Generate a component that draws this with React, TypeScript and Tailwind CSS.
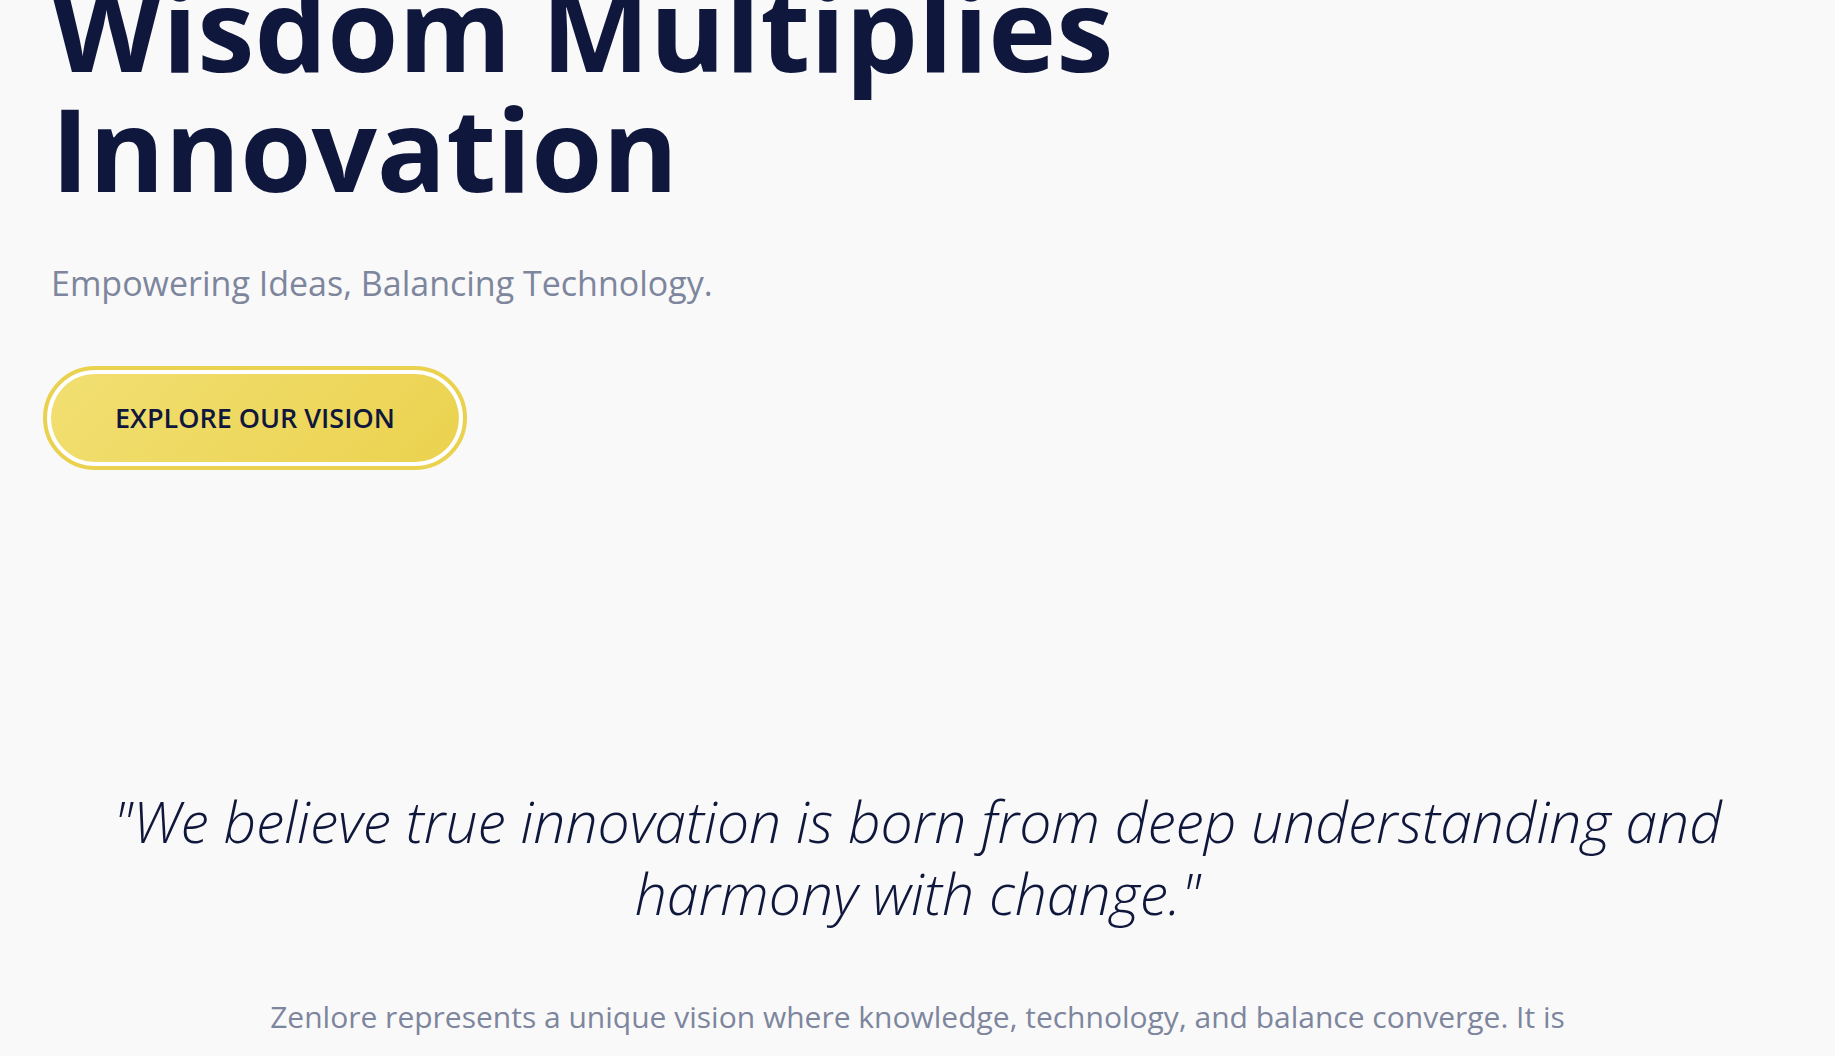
export default function App() {
  return (
    <div className="h-screen overflow-hidden bg-[#f9f9f9] font-['Open_Sans','Noto_Sans',sans-serif] text-[#0f173c]">
      <section className="px-[51px]">
        <h1 className="-mt-8 max-w-6xl text-[115px] leading-[120px] font-bold">Wisdom Multiplies Innovation</h1>
        <p className="mt-12 text-[34px] leading-[54px] text-[#7d869d]">Empowering Ideas, Balancing Technology.</p>
        <a href="#vision" className="mt-16 inline-flex h-[88px] items-center rounded-full bg-linear-135 from-[#f1df71] to-[#ebd24e] px-16 text-[27px] font-semibold ring-4 ring-white outline-4 outline-offset-4 outline-[#ebd24e]">EXPLORE OUR VISION</a>
      </section>
      <section id="vision" className="mt-[323px] px-[51px] text-center">
        <blockquote className="text-[57px] leading-[72px] font-light italic">"We believe true innovation is born from deep understanding and harmony with change."</blockquote>
        <p className="mx-auto mt-15 max-w-[1400px] text-[30px] leading-[56px] text-[#7d869d]">Zenlore represents a unique vision where knowledge, technology, and balance converge. It is</p>
      </section>
    </div>
  );
}
